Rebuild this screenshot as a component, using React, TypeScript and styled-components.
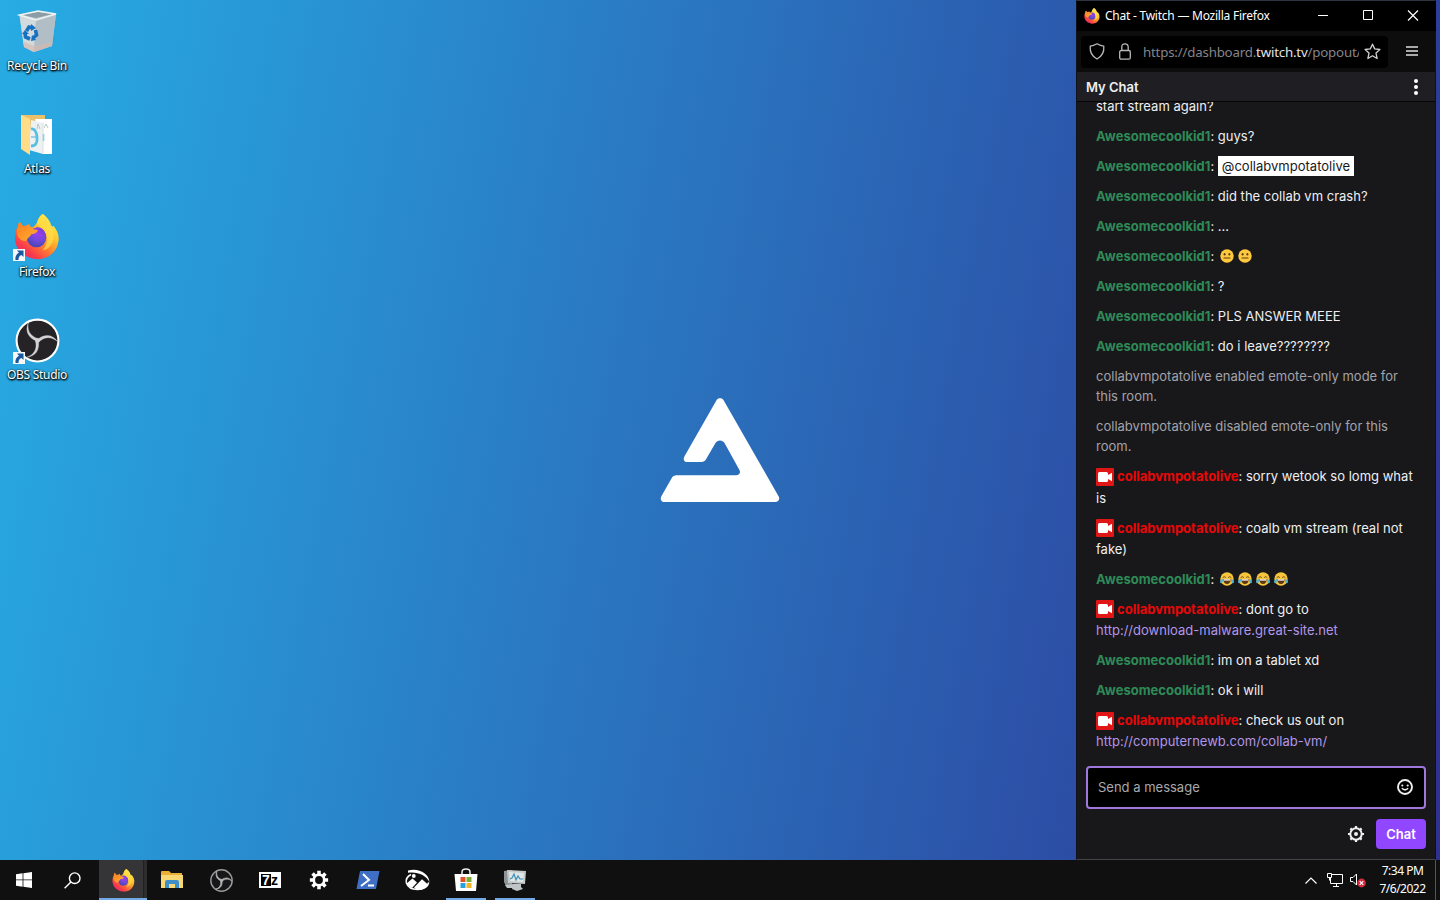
import React, { useId } from 'react';
import styled, { createGlobalStyle, css } from 'styled-components';

const GlobalStyle = createGlobalStyle`
  *, *::before, *::after { box-sizing: border-box; }
  html, body { margin: 0; padding: 0; background: #101010; overflow: hidden; }
  svg { display: block; flex: none; overflow: visible; }
  button { padding: 0; border: 0; background: none; color: inherit; font: inherit; }
`;

const segoe = '"Noto Sans", "Open Sans", sans-serif';
const inter = 'Inter, "Liberation Sans", sans-serif';

const Screen = styled.div`
  display: grid;
  grid-template-rows: 860px 40px;
  width: 1440px;
  height: 900px;
  overflow: hidden;
`;

const Desktop = styled.main`
  position: relative;
  display: flex;
  justify-content: space-between;
  padding-right: 4px;
  background: linear-gradient(101deg, #27ace3 0%, #2e3192 100%);
`;

const Shortcuts = styled.div`
  display: flex;
  flex-direction: column;
  width: 74px;
  padding-top: 7px;
`;

const Shortcut = styled.div`
  display: flex;
  flex-direction: column;
  align-items: center;
  gap: 3px;
  height: 103px;
`;

const ShortcutIcon = styled.div`
  position: relative;
  display: flex;
  align-items: center;
  justify-content: center;
  width: 48px;
  height: 48px;
`;

const ShortcutArrow = styled.div`
  position: absolute;
  left: 0;
  bottom: 0;
`;

const ShortcutLabel = styled.span<{ $spacing: number }>`
  color: #fff;
  font: 400 12px/16px ${segoe};
  letter-spacing: ${(p) => p.$spacing}px;
  white-space: nowrap;
  text-shadow: 0 1px 2px #000, 1px 1px 2px #000, 0 0 2px rgba(0, 0, 0, 0.6);
`;

const Emblem = styled.div`
  position: absolute;
  left: 660px;
  top: 397px;
`;

const Window = styled.section`
  display: flex;
  flex-direction: column;
  width: 360px;
  height: 860px;
  border: 1px solid #2d3440;
  border-bottom-color: #444;
  border-right-color: #111;
  border-left-color: #10131c;
  background: #18181b;
`;

const TitleBar = styled.header`
  display: flex;
  align-items: center;
  flex: none;
  height: 30px;
  margin-right: -1px;
  padding-left: 7px;
  background: #000;
  color: #fff;
`;

const Title = styled.span`
  flex: 1;
  margin-left: 5px;
  font: 400 12px/16px ${segoe};
  letter-spacing: -0.24px;
  white-space: nowrap;
`;

const CaptionButton = styled.button`
  display: flex;
  align-items: center;
  justify-content: center;
  width: 45px;
  height: 30px;
  &:last-child { width: 46px; }
`;

const NavBar = styled.div`
  display: flex;
  align-items: center;
  flex: none;
  height: 41px;
  padding: 0 17px 0 4px;
  background: #0d0d0d;
`;

const UrlField = styled.div`
  display: flex;
  align-items: center;
  width: 307px;
  height: 32px;
  margin-right: auto;
  padding: 0 7px 0 8px;
  border-radius: 4px;
  background: #000;
  color: #b8b8b8;
`;

const UrlText = styled.span`
  flex: 1;
  margin: 1px 5px 0 12px;
  overflow: hidden;
  color: #858588;
  font: 400 13.3px/20px ${segoe};
  letter-spacing: -0.2px;
  white-space: nowrap;
`;

const UrlHost = styled.span`
  color: #e4e4e4;
`;

const UrlIcon = styled.span`
  flex: none;
  margin-right: 14px;
  &:last-child { margin-right: 0; }
`;

const ChatHeader = styled.div`
  display: flex;
  align-items: center;
  justify-content: space-between;
  flex: none;
  height: 30px;
  padding: 0 17px 0 9px;
  border-bottom: 1px solid #060607;
  background: #1f1f23;
  color: #efeff1;
  font: 600 13px/20px ${inter};
`;

const Messages = styled.div`
  display: flex;
  flex: 1;
  flex-direction: column;
  justify-content: flex-end;
  min-height: 0;
  padding: 0 19px 0;
  overflow: hidden;
`;

const Message = styled.div<{ $notice?: boolean }>`
  flex: none;
  padding: 5px 0;
  color: ${(p) => (p.$notice ? '#a3a3aa' : '#efeff1')};
  font: 400 13px/20px ${inter};
  letter-spacing: 0.01px;
`;

const Author = styled.span<{ $owner?: boolean }>`
  font-weight: 700;
  color: ${(p) => (p.$owner ? '#e60808' : '#2e8b57')};
`;

const Badge = styled.span`
  display: inline-block;
  width: 18px;
  height: 18px;
  margin: 0 3px 1.7px 0;
  vertical-align: middle;
`;

const Mention = styled.span`
  display: inline-block;
  padding: 0 4px;
  background: #fff;
  color: #18181b;
`;

const ChatLink = styled.a`
  display: inline-block;
  color: #b196e8;
  white-space: nowrap;
`;

const Emote = styled.span`
  display: inline-block;
  width: 18px;
  height: 14px;
  padding-left: 2px;
  vertical-align: -2px;
`;

const Composer = styled.div`
  display: flex;
  flex: none;
  flex-direction: column;
  gap: 10px;
  padding: 9.6px 9px 10px;
`;

const MessageField = styled.div`
  display: flex;
  align-items: center;
  justify-content: space-between;
  height: 43px;
  padding: 0 11px 1px 10px;
  border: 2px solid #a077dc;
  border-radius: 4px;
  background: #000;
  color: #a9a9ad;
  font: 400 13px/20px ${inter};
`;

const ComposerActions = styled.div`
  display: flex;
  align-items: center;
  justify-content: flex-end;
  gap: 12px;
  color: #efeff1;
`;

const ChatButton = styled.button`
  width: 50px;
  height: 30px;
  border-radius: 4px;
  background: #9147ff;
  color: #fff;
  font: 600 13px/20px ${inter};
`;

const Taskbar = styled.footer`
  display: flex;
  justify-content: space-between;
  background: #101010;
  color: #fff;
`;

const TaskGroup = styled.div`
  display: flex;
`;

const Apps = styled.div`
  display: flex;
  gap: 1px;
  margin-left: 3px;
`;

const Task = styled.button<{ $active?: boolean; $running?: boolean }>`
  position: relative;
  display: flex;
  align-items: center;
  justify-content: center;
  width: 48px;
  height: 40px;
  ${(p) =>
    p.$active &&
    css`
      background: linear-gradient(90deg, #353538 44px, #202022 44px, #202022 45px, #2d2d30 45px);
    `}
  ${(p) =>
    (p.$active || p.$running) &&
    css`
      &::after {
        content: '';
        position: absolute;
        left: ${p.$active ? 0 : 4}px;
        right: ${p.$active ? 0 : 4}px;
        bottom: 0;
        height: 2px;
        background: #70a9e4;
      }
    `}
`;

const Tray = styled.div`
  display: flex;
  align-items: center;
`;

const TrayIcon = styled.span<{ $gap: number }>`
  margin-right: ${(p) => p.$gap}px;
`;

const Clock = styled.div`
  width: 69px;
  height: 40px;
  padding: 2px 0 0 4px;
  text-align: center;
  font: 400 12px/18px ${segoe};
  letter-spacing: -0.5px;
`;

const ShowDesktop = styled.div`
  width: 5px;
  height: 40px;
  border-left: 1px solid #555;
`;

function FirefoxIcon({ size }: { size: number }) {
  const id = useId();
  return (
    <svg width={size} height={size} viewBox="0 0 48 48">
      <defs>
        <linearGradient id={`${id}a`} x1="0.85" y1="0.1" x2="0.15" y2="0.95">
          <stop offset="0" stopColor="#fff04a" />
          <stop offset="0.3" stopColor="#ffc02c" />
          <stop offset="0.58" stopColor="#ff7632" />
          <stop offset="0.82" stopColor="#fa3a4c" />
          <stop offset="1" stopColor="#e9286c" />
        </linearGradient>
        <radialGradient id={`${id}b`} cx="0.6" cy="0.25" r="0.8">
          <stop offset="0" stopColor="#a83af4" />
          <stop offset="0.5" stopColor="#7449dc" />
          <stop offset="1" stopColor="#3f45b3" />
        </radialGradient>
        <linearGradient id={`${id}c`} x1="0" y1="0" x2="1" y2="1">
          <stop offset="0" stopColor="#ff7d20" />
          <stop offset="1" stopColor="#ffb030" />
        </linearGradient>
      </defs>
      <path
        fill={`url(#${id}a)`}
        d="M30 0C34 3 38 7 38 12C40 13 41 14 41 12C45 17 48 23 46 30C44 41 34 48 23 47C11 46 1 37 1 25C1 20 2 16 4 13C4 11 5 9 6 8C7 10 9 12 10 13C12 12 16 13 18 14C22 13 22 11 24 9C25 5 27 2 30 0Z"
      />
      <path fill="#ffe04a" opacity="0.7" d="M30 0C39 7 43 18 41 27C39 34 34 37 30 38C37 29 35 22 31 17C28 14 25 13 24 9C25 5 27 2 30 0Z" />
      <circle cx="23.500" cy="24.500" r="10.200" fill={`url(#${id}b)`} />
      <path fill={`url(#${id}c)`} d="M3 18C4 12 5 10 6 8C7 10 9 12 10 13C12 12 16 11 16 10C17 15 20 16 25 17C24 20 21 21 18 21C17 24 14 24 13 28C7 29 3 24 3 18Z" />
      <path fill="#8242d6" d="M23 14C29 13 34 18 33 25C31 22 28 20 25 20C27 18 26 16 23 14Z" />
    </svg>
  );
}

function ObsIcon({ size, small }: { size: number; small?: boolean }) {
  const light = small ? '#b4b4b4' : '#d5d3d6';
  return (
    <svg width={size} height={size} viewBox="0 0 48 48">
      <circle cx="24" cy="24" r="22.300" fill={small ? '#171719' : '#252326'} stroke={small ? '#999' : '#fff'} strokeWidth={small ? 3 : 2.2} />
      {[0, 120, 240].map((a) => (
        <path key={a} transform={`rotate(${a} 24 24)`} fill={light} stroke={light} strokeWidth={small ? 1.4 : 0.3} d="M14.300 5C12.800 13 16 19.500 25 22L23.500 24.800C14.500 21.500 10 14 14.300 5Z" />
      ))}
      <circle cx="24" cy="24" r="2.300" fill={light} />
    </svg>
  );
}

function RecycleBinIcon() {
  return (
    <svg width="40" height="46" viewBox="-1 0 40 46">
      <path fill="#bccbd2" d="M1.500 7L20 3L38 6L34 38L16 44L6 39Z" />
      <path fill="#d3dadd" d="M1.500 7L18 12L16 44L6 39Z" />
      <path fill="#b1bec5" d="M18 12L38 6L34 38L16 44Z" />
      <path fill="#8c9da6" d="M4 7L20 4L35 6L18 10Z" />
      <path fill="#d7b8ad" opacity="0.65" d="M6 34L16 38L34 34L33.500 38L16 44L6 39Z" />
      <path fill="none" stroke="#eef2f3" strokeWidth="1.500" d="M1.500 7L20 3L38 6L18 12Z" />
      <g fill="none" stroke="#1671c2" strokeWidth="3.600">
        <path d="M8.500 23L11 19L15 20" />
        <path d="M17.500 22L18.500 27L15 30" />
        <path d="M12 31L7.500 29L7 25" />
      </g>
      <path fill="#1671c2" d="M13 16L18 20L13 23ZM18 32L13 33L14 27ZM4 26L7 22L11 26Z" />
    </svg>
  );
}

function AtlasFolderIcon() {
  return (
    <svg width="34" height="44" viewBox="0 0 34 44">
      <path fill="#eac06b" d="M1 3H25V38H8L1 36Z" />
      <path fill="#fff" d="M15 7L32 7V42H22Z" />
      <path fill="#eef1f2" d="M11 8L23 11V42L9 38Z" />
      <path fill="#ffdc87" d="M1 3L10 7V43L1 37Z" />
      <path fill="none" stroke="#59bfe0" strokeWidth="2.800" d="M11 17Q16 16 17 25T11 34" />
      <path stroke="#7cc3dc" strokeWidth="1.600" d="M11 25H16M23.500 22V29" />
      <path fill="none" stroke="#a9bdb4" strokeWidth="0.800" d="M17 17L18 12L20 17M24 16L26 12L28 16" />
      <path stroke="#d6dadb" strokeWidth="0.800" d="M23 11V42" />
    </svg>
  );
}

function ArrowOverlay() {
  return (
    <svg width="12" height="12" viewBox="0 0 12 12">
      <path fill="#f7f8fa" d="M0 0H12V12H0Z" />
      <path fill="#19579e" d="M4 1.500H10.500V8L8.500 6C6 7 5.500 8.500 5.500 11H2.500C2 7.500 3.500 5 6 3.800Z" />
    </svg>
  );
}

function AtlasEmblem() {
  return (
    <svg width="120" height="106" viewBox="0 0 120 106">
      <path
        fill="#fff"
        d="M56.500 3.200C58 .6 62 .6 63.600 3.200L118.400 99C120.400 102.300 118.600 105 115 105H5C1.200 105-.3 102.300 1.500 99L11.200 82C12.800 79 14 78.300 17.200 78.300H76C79.500 78.300 81 75.700 79.300 72.700L64.500 46C62.700 42.600 57.300 42.600 55.500 46L46.300 61.800C44.700 64.500 43.500 65 40.500 65H27.500C23.800 65 22.800 62.200 24.500 59.200Z"
      />
    </svg>
  );
}

function VideoBadge() {
  return (
    <svg width="18" height="18" viewBox="0 0 18 18">
      <rect width="18" height="18" rx="1" fill="#e01616" />
      <path fill="#fff" d="M3.500 4H10.500Q12 4 12 5.500V7L16 4.700V13.300L12 11V12.500Q12 14 10.500 14H3.500Q2 14 2 12.500V5.500Q2 4 3.500 4Z" />
    </svg>
  );
}

function NeutralFace() {
  return (
    <svg width="14" height="14" viewBox="0 0 14 14">
      <circle cx="7" cy="7" r="6.700" fill="#ffc83d" />
      <ellipse cx="4.600" cy="5.300" rx="0.950" ry="1.200" fill="#5a3d16" />
      <ellipse cx="9.400" cy="5.300" rx="0.950" ry="1.200" fill="#5a3d16" />
      <path stroke="#5a3d16" strokeWidth="1.200" strokeLinecap="round" d="M4 9H10" />
    </svg>
  );
}

function JoyFace() {
  return (
    <svg width="14" height="14" viewBox="0 0 14 14">
      <circle cx="7" cy="7" r="6.700" fill="#f8c53a" />
      <path fill="none" stroke="#654519" strokeWidth="0.900" strokeLinecap="round" d="M2.800 5.500Q4.200 3.500 5.600 5.300M8.400 5.300Q9.800 3.500 11.200 5.500" />
      <path fill="#5c3716" d="M3.300 7.300H10.700Q10.500 12 7 12T3.300 7.300Z" />
      <path fill="#fff" d="M3.800 7.300H10.200V8.600H3.800Z" />
      <path fill="#4fb5d5" d="M3 7Q0 7.500 0 10Q.5 12 2.200 11Q3.300 9.500 3 7ZM11 7Q14 7.500 14 10Q13.500 12 11.800 11Q10.700 9.500 11 7Z" />
    </svg>
  );
}

const gearPath = (cx: number, cy: number, inner: number, outer: number) => {
  const points: string[] = [];
  for (let i = 0; i < 8; i += 1) {
    [[-0.28, inner], [-0.19, outer], [0.19, outer], [0.28, inner]].forEach(([offset, radius]) => {
      const angle = (i * Math.PI) / 4 + offset;
      points.push(`${(cx + radius * Math.sin(angle)).toFixed(2)} ${(cy - radius * Math.cos(angle)).toFixed(2)}`);
    });
  }
  return `M${points.join('L')}Z`;
};

function ChatSettingsIcon() {
  return (
    <svg width="16" height="16" viewBox="0 0 16 16" fill="none" stroke="#efeff1">
      <circle cx="8" cy="8" r="5.700" strokeWidth="2" />
      <path strokeWidth="2.200" d="M8 0V3M8 13V16M0 8H3M13 8H16M2.400 2.400L4 4M12 12L13.600 13.600M2.400 13.600L4 12M12 4L13.600 2.400" />
      <circle cx="8" cy="8" r="2" fill="#efeff1" stroke="none" />
    </svg>
  );
}

function SmileyIcon() {
  return (
    <svg width="16" height="16" viewBox="0 0 16 16" fill="none" stroke="#efeff1" strokeWidth="1.900">
      <circle cx="8" cy="8" r="7" />
      <path d="M4.900 9.300Q8 12.300 11.100 9.300" strokeWidth="1.600" />
      <circle cx="5.300" cy="6.500" r="1.050" fill="#efeff1" stroke="none" />
      <circle cx="10.700" cy="6.500" r="1.050" fill="#efeff1" stroke="none" />
    </svg>
  );
}

function ExplorerIcon() {
  return (
    <svg width="22" height="18" viewBox="0 0 22 18">
      <path fill="#e9ae35" d="M0 1Q0 0 1 0H8L10 2H21V7H0Z" />
      <path fill="#f8d775" d="M0 4H22V17H0Z" />
      <path fill="#3e8ec9" d="M4 17V11Q4 9 6 9H16Q18 9 18 11V17H14V13H8V17Z" />
    </svg>
  );
}

const SevenZip = styled.span`
  display: flex;
  align-items: center;
  width: 22px;
  height: 16px;
  border: 2px solid #fff;
  background: #fff;
  color: #000;
  font: 700 14px/12px "Liberation Sans", sans-serif;
`;

const SevenZipDigit = styled.span`
  width: 10px;
  height: 12px;
  background: #000;
  color: #fff;
  text-align: center;
`;

function StoreIcon() {
  return (
    <svg width="24" height="24" viewBox="0 0 24 24">
      <path fill="none" stroke="#eee" strokeWidth="1.500" d="M8 7V4Q8 1 12 1T16 4V7" />
      <path fill="#fff" d="M.5 6H23.500L22 23H2Z" />
      <path fill="#e34f28" d="M6.500 9H11.500V14H6.500Z" />
      <path fill="#79af32" d="M12.500 9H17.500V14H12.500Z" />
      <path fill="#25a1df" d="M6.500 15H11.500V20H6.500Z" />
      <path fill="#f1b52d" d="M12.500 15H17.500V20H12.500Z" />
    </svg>
  );
}

function MonitorIcon() {
  return (
    <svg width="24" height="22" viewBox="0 0 24 22">
      <path fill="#8d9498" d="M1 2L9 1V16L3 17L1 13Z" />
      <path fill="#c5c9ca" d="M4 1L23 2L22 15L5 14Z" />
      <path fill="#dfe6e8" d="M6 3L21 4L20 13L7 12Z" />
      <path fill="none" stroke="#3c8fb5" strokeWidth="1.200" d="M7 10L9 9L11 5L13 11L15 7L17 10H20" />
      <path fill="#bfc4c6" d="M10 15H18V18L20 20L14 22L9 20ZM2 16L10 15V19L4 19Z" />
    </svg>
  );
}

function SystemIcon({ name }: { name: string }) {
  switch (name) {
    case 'start':
      return <svg width="16" height="16" viewBox="0 0 16 16"><path fill="#fff" d="M0 2.200L6.600 1.300V7.500H0ZM7.400 1.200L16 0V7.500H7.400ZM0 8.300H6.600V14.700L0 13.800ZM7.400 8.300H16V16L7.400 14.800Z" /></svg>;
    case 'search':
      return <svg width="17" height="17" viewBox="0 0 17 17" fill="none" stroke="#fff" strokeWidth="1.400"><circle cx="10.700" cy="6.200" r="5.300" /><path d="M6.900 10L.6 16.300" /></svg>;
    case 'settings':
      return <svg width="20" height="20" viewBox="0 0 20 20"><path fill="#fff" fillRule="evenodd" d={`${gearPath(10, 10, 6.600, 9.300)}M13.900 10A3.900 3.900 0 1 0 6.100 10A3.900 3.900 0 1 0 13.900 10Z`} /></svg>;
    case 'powershell':
      return <svg width="24" height="18" viewBox="0 0 24 18"><path fill="#3f6fc5" d="M4 0H23.500L20 18H.5Z" /><path fill="none" stroke="#fff" strokeWidth="2" d="M7 3L13 9L5 15M12 14.500H18" /></svg>;
    case 'image':
      return (
        <svg width="25" height="22" viewBox="0 0 25 22">
          <path fill="#fff" d="M3 1.500C13-1.500 24 4 24.500 13C21 6.500 13 2.500 3 3.800Z" />
          <path fill="none" stroke="#fff" strokeWidth="1.600" d="M6 5.500C2 7.500.8 11 1.400 14C3 18.500 8 20.500 12.500 20.500C18 20.500 22.500 18 23.700 13.500" />
          <path fill="#fff" d="M9 18.500L17 10.300L23.500 16Q20 21 12 21Z" />
          <path fill="#fff" d="M1.500 14.500L7.500 9.500L12 13.500L7 19Q3 17.500 1.500 14.500Z" />
          <circle cx="8.800" cy="7" r="1.900" fill="#fff" />
        </svg>
      );
    case 'shield':
      return <svg width="16" height="17" viewBox="0 0 16 17" fill="none" stroke="currentColor" strokeWidth="1.300" strokeLinejoin="round"><path d="M8 .8Q11.500 2.800 14.800 3.200Q15.500 12 8 16Q.5 12 1.200 3.200Q4.500 2.800 8 .8Z" /></svg>;
    case 'lock':
      return <svg width="12" height="17" viewBox="0 0 12 17" fill="none" stroke="currentColor" strokeWidth="1.300"><rect x=".7" y="7.500" width="10.600" height="8.700" rx="1.500" /><path d="M2.800 7.500V4Q2.800.8 6 .8T9.200 4V7.500" /></svg>;
    case 'star':
      return <svg width="17" height="17" viewBox="0 0 17 17" fill="none" stroke="#d0d0d0" strokeWidth="1.300" strokeLinejoin="round"><path d="M8.500 1.200L10.700 5.900L15.900 6.500L12 10.100L13.100 15.500L8.500 12.800L3.900 15.500L5 10.100L1.100 6.500L6.300 5.900Z" /></svg>;
    case 'menu':
      return <svg width="12" height="11" viewBox="0 0 12 11"><path stroke="#ddd" strokeWidth="1.300" d="M0 1H12M0 5H12M0 9H12" /></svg>;
    case 'more':
      return <svg width="4" height="16" viewBox="0 0 4 16" fill="#fff"><circle cx="2" cy="2" r="2" /><circle cx="2" cy="8" r="2" /><circle cx="2" cy="14" r="2" /></svg>;
    case 'minimize':
      return <svg width="10" height="10" viewBox="0 0 10 10"><path stroke="#fff" d="M0 4.500H10" /></svg>;
    case 'maximize':
      return <svg width="10" height="10" viewBox="0 0 10 10"><path fill="none" stroke="#fff" d="M.5-.5H9.500V8.500H.5Z" /></svg>;
    case 'close':
      return <svg width="10" height="10" viewBox="0 0 10 10"><path stroke="#fff" strokeWidth="1.200" d="M0-.5L10 9.500M10-.5L0 9.500" /></svg>;
    case 'chevron':
      return <svg width="12" height="7" viewBox="0 0 12 7"><path fill="none" stroke="#fff" strokeWidth="1.200" d="M.5 6.500L6 1L11.500 6.500" /></svg>;
    case 'network':
      return <svg width="16" height="14" viewBox="0 0 16 14" fill="none" stroke="#fff"><path d="M4.500 1.500H15.500V10.500H3.500V5M9.500 10.500V13M6 13.500H12M.5.500H4.500V4.500H.5ZM2.500 4.500V7.500" /></svg>;
    default:
      return (
        <svg width="16" height="16" viewBox="0 0 16 16">
          <path fill="none" stroke="#fff" d="M.5 5.500H3L6.500 2V13L3 9.500H.5Z" />
          <circle cx="11.500" cy="11" r="4.400" fill="#d4283c" />
          <path stroke="#fff" strokeWidth="1.200" d="M9.700 9.200L13.300 12.800M13.300 9.200L9.700 12.800" />
        </svg>
      );
  }
}

type ChatEntry = { kind: 'viewer' | 'owner' | 'notice' | 'continued'; body: React.ReactNode };

const chatLog: ChatEntry[] = [
  { kind: 'continued', body: 'start stream again?' },
  { kind: 'viewer', body: 'guys?' },
  { kind: 'viewer', body: <Mention>@collabvmpotatolive</Mention> },
  { kind: 'viewer', body: 'did the collab vm crash?' },
  { kind: 'viewer', body: '...' },
  { kind: 'viewer', body: [0, 1].map((n) => <Emote key={n}><NeutralFace /></Emote>) },
  { kind: 'viewer', body: '?' },
  { kind: 'viewer', body: 'PLS ANSWER MEEE' },
  { kind: 'viewer', body: 'do i leave????????' },
  { kind: 'notice', body: 'collabvmpotatolive enabled emote-only mode for this room.' },
  { kind: 'notice', body: 'collabvmpotatolive disabled emote-only for this room.' },
  { kind: 'owner', body: 'sorry wetook so lomg what is' },
  { kind: 'owner', body: 'coalb vm stream (real not fake)' },
  { kind: 'viewer', body: [0, 1, 2, 3].map((n) => <Emote key={n}><JoyFace /></Emote>) },
  { kind: 'owner', body: <>dont go to <ChatLink>http://download-malware.great-site.net</ChatLink></> },
  { kind: 'viewer', body: 'im on a tablet xd' },
  { kind: 'viewer', body: 'ok i will' },
  { kind: 'owner', body: <>check us out on <ChatLink>http://computernewb.com/collab-vm/</ChatLink></> },
];

function ChatMessage({ entry }: { entry: ChatEntry }) {
  if (entry.kind === 'notice') return <Message $notice>{entry.body}</Message>;
  if (entry.kind === 'continued') return <Message>{entry.body}</Message>;
  const owner = entry.kind === 'owner';
  return (
    <Message>
      {owner && <Badge><VideoBadge /></Badge>}
      <Author $owner={owner}>{owner ? 'collabvmpotatolive' : 'Awesomecoolkid1'}</Author>: {entry.body}
    </Message>
  );
}

const shortcuts = [
  { label: 'Recycle Bin', icon: <RecycleBinIcon />, linked: false, spacing: -0.3 },
  { label: 'Atlas', icon: <AtlasFolderIcon />, linked: false, spacing: -0.3 },
  { label: 'Firefox', icon: <FirefoxIcon size={46} />, linked: true, spacing: -0.3 },
  { label: 'OBS Studio', icon: <ObsIcon size={45} />, linked: true, spacing: -0.3 },
];

export default function App() {
  return (
    <>
      <GlobalStyle />
      <Screen>
        <Desktop>
          <Shortcuts>
            {shortcuts.map((item) => (
              <Shortcut key={item.label}>
                <ShortcutIcon>
                  {item.icon}
                  {item.linked && <ShortcutArrow><ArrowOverlay /></ShortcutArrow>}
                </ShortcutIcon>
                <ShortcutLabel $spacing={item.spacing}>{item.label}</ShortcutLabel>
              </Shortcut>
            ))}
          </Shortcuts>
          <Emblem><AtlasEmblem /></Emblem>
          <Window>
            <TitleBar>
              <FirefoxIcon size={16} />
              <Title>Chat - Twitch — Mozilla Firefox</Title>
              {['minimize', 'maximize', 'close'].map((name) => (
                <CaptionButton key={name} aria-label={name}><SystemIcon name={name} /></CaptionButton>
              ))}
            </TitleBar>
            <NavBar>
              <UrlField>
                <UrlIcon><SystemIcon name="shield" /></UrlIcon>
                <SystemIcon name="lock" />
                <UrlText>https://dashboard.<UrlHost>twitch.tv</UrlHost>/popout/</UrlText>
                <UrlIcon><SystemIcon name="star" /></UrlIcon>
              </UrlField>
              <SystemIcon name="menu" />
            </NavBar>
            <ChatHeader>
              My Chat
              <SystemIcon name="more" />
            </ChatHeader>
            <Messages>
              {chatLog.map((entry, i) => <ChatMessage key={i} entry={entry} />)}
            </Messages>
            <Composer>
              <MessageField>
                Send a message
                <SmileyIcon />
              </MessageField>
              <ComposerActions>
                <ChatSettingsIcon />
                <ChatButton>Chat</ChatButton>
              </ComposerActions>
            </Composer>
          </Window>
        </Desktop>
        <Taskbar>
          <TaskGroup>
            <Task aria-label="Start"><SystemIcon name="start" /></Task>
            <Task aria-label="Search"><SystemIcon name="search" /></Task>
            <Apps>
              <Task $active><FirefoxIcon size={23} /></Task>
              <Task><ExplorerIcon /></Task>
              <Task><ObsIcon size={23} small /></Task>
              <Task><SevenZip><SevenZipDigit>7</SevenZipDigit>z</SevenZip></Task>
              <Task><SystemIcon name="settings" /></Task>
              <Task><SystemIcon name="powershell" /></Task>
              <Task><SystemIcon name="image" /></Task>
              <Task $running><StoreIcon /></Task>
              <Task $running><MonitorIcon /></Task>
            </Apps>
          </TaskGroup>
          <Tray>
            <TrayIcon $gap={10}><SystemIcon name="chevron" /></TrayIcon>
            <TrayIcon $gap={7}><SystemIcon name="network" /></TrayIcon>
            <SystemIcon name="volume" />
            <Clock>7:34 PM<br />7/6/2022</Clock>
            <ShowDesktop />
          </Tray>
        </Taskbar>
      </Screen>
    </>
  );
}
